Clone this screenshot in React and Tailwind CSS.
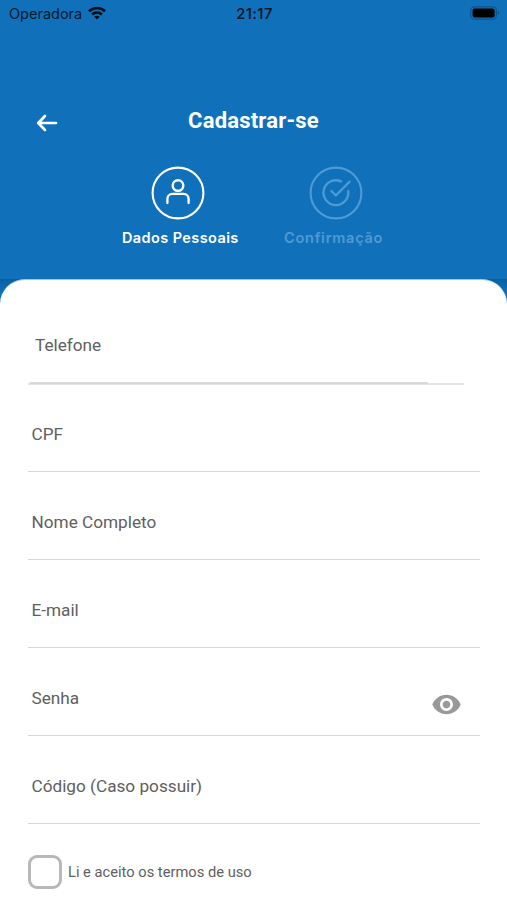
import React, { useState } from 'react';
import { MdRemoveRedEye } from 'react-icons/md';

const fields = [
  { name: 'cpf', label: 'CPF' },
  { name: 'nome', label: 'Nome Completo' },
  { name: 'email', label: 'E-mail' },
  { name: 'senha', label: 'Senha', secure: true },
  { name: 'codigo', label: 'Código (Caso possuir)' },
];

const StatusBar = () => (
  <div className="flex h-7 items-center justify-between pl-[9px] pr-[7px] font-['Inter',sans-serif] text-[#041a2b]">
    <div className="flex w-[120px] items-center gap-[6px]">
      <span className="text-[14.5px] leading-none">Operadora</span>
      <svg width="18" height="14" viewBox="0 0 18 14" fill="none" stroke="#020d16" strokeWidth="2.7" className="mb-[2px]">
        <path d="M1 5.2C5.6 .9 12.4.9 17 5.2" />
        <path d="M4.1 8.6c2.9-2.6 6.9-2.6 9.8 0" />
        <path d="M9 13.6 6.2 10.8c1.6-1.4 4-1.4 5.6 0z" fill="#020d16" stroke="none" />
      </svg>
    </div>
    <span className="text-[14.5px] font-semibold leading-none tracking-[0.4px]">21:17</span>
    <div className="flex w-[120px] justify-end">
      <svg width="30" height="14" viewBox="0 0 30 14" className="mb-[2px]">
        <rect x=".8" y=".8" width="25.6" height="12.4" rx="3.6" fill="none" stroke="#0b548b" strokeWidth="1.2" />
        <rect x="2.6" y="2.6" width="22" height="8.8" rx="2" fill="#000" />
        <path d="M27.8 5v4c1.6-.6 1.6-3.4 0-4z" fill="#0b548b" />
      </svg>
    </div>
  </div>
);

const Step = ({ label, labelClass, className, children }) => (
  <div className={`flex flex-col ${className}`}>
    <svg width="54" height="54" viewBox="0 0 54 54" fill="none" stroke="currentColor" strokeWidth="2.1" strokeLinecap="round" strokeLinejoin="round">
      <circle cx="27" cy="27" r="25.4" />
      {children}
    </svg>
    <span className={`mt-[9px] whitespace-nowrap font-['Inter',sans-serif] text-[14.5px] font-semibold leading-[18px] ${labelClass}`}>
      {label}
    </span>
  </div>
);

const App = () => {
  const [accepted, setAccepted] = useState(false);

  return (
    <div className="flex h-[900px] w-[507px] flex-col overflow-hidden bg-[#1071ba] font-['Roboto',sans-serif]">
      <header className="h-[279px] shrink-0 text-white">
        <StatusBar />
        <div className="mt-[76px] grid h-[34px] grid-cols-[120px_1fr_120px] items-center">
          <button aria-label="Voltar" className="ml-[36px] mt-[4px] w-[22px]">
            <svg width="22" height="18" viewBox="0 0 22 18" fill="none" stroke="currentColor" strokeWidth="2.7" strokeLinecap="round" strokeLinejoin="round">
              <path d="M20 9H2.6M9 2 2.2 9l6.8 7" />
            </svg>
          </button>
          <h1 className="text-center text-[22px] font-bold leading-none tracking-[0.2px]">Cadastrar-se</h1>
        </div>
        <div className="mt-[28px] flex">
          <Step label="Dados Pessoais" labelClass="-ml-[29px] tracking-[0.4px]" className="ml-[151px] w-[54px]">
            <circle cx="27" cy="19.6" r="5.3" strokeWidth="2.4" />
            <path d="M16.4 37v-4.2a5 5 0 0 1 5-5h11.2a5 5 0 0 1 5 5V37" strokeWidth="2.3" />
          </Step>
          <Step label="Confirmação" labelClass="-ml-[25px] tracking-[0.75px]" className="ml-[104px] w-[54px] text-[#4f9ad3]">
            <path d="M32 15.4A12.4 12.4 0 1 0 39.2 25" strokeWidth="2.3" />
            <path d="m22.4 25 4.5 4.5L40.6 15.6" strokeWidth="2.3" />
          </Step>
        </div>
      </header>

      <div className="flex-1 bg-linear-to-b from-[#0a609f] to-[#1071ba] to-[14px]">
        <main className="h-full rounded-t-[25px] border-t border-[#9dc6e4] bg-white pl-[28px] pr-[27px]">
          <div className="flex h-[105px] w-[436px] flex-col border-b-2 border-[#e4e4e4]">
            <label className="ml-[7px] mt-[53px] text-[17.2px] leading-6 text-[#606060]">Telefone</label>
            <div className="-mb-px ml-[2px] mt-auto h-[2px] w-[398px] bg-[#d8d8d8]" />
          </div>

          {fields.map((field, i) => (
            <div
              key={field.name}
              className={`flex items-start justify-between border-b border-[#d8d8d8] pl-[3.5px] pr-[18px] ${i === 0 ? 'h-[87px] pt-[37px]' : 'h-[88px] pt-[38px]'}`}
            >
              <label className="text-[17.2px] leading-6 text-[#606060]">{field.label}</label>
              {field.secure && <MdRemoveRedEye className="mt-[3px] text-[31px] text-[#999]" />}
            </div>
          ))}

          <div className="mt-[31px] flex items-center gap-[6px]">
            <button
              role="checkbox"
              aria-checked={accepted}
              aria-label="Aceitar termos"
              onClick={() => setAccepted(!accepted)}
              className="size-[34px] rounded-[9px] border-[3.5px] border-[#b8b8b8]"
            />
            <span className="text-[14.7px] leading-5 text-[#606060]">Li e aceito os termos de uso</span>
          </div>
        </main>
      </div>
    </div>
  );
};

export default App;
